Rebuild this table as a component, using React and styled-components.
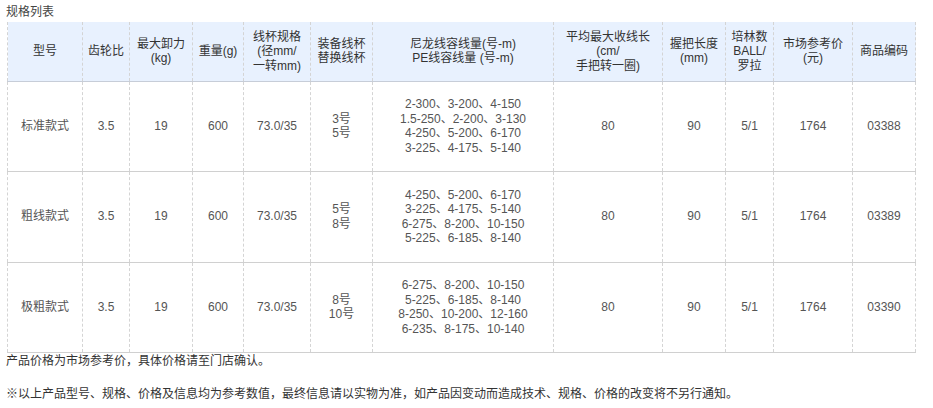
import styled, { createGlobalStyle } from 'styled-components';

const GlobalStyle = createGlobalStyle`
  body {
    margin: 0;
    background: #fff;
    font-family: "Liberation Sans", Arial, "Noto Sans CJK SC", sans-serif;
    font-size: 12px;
    color: #333;
  }
`;

const Page = styled.div`
  padding: 0 6px;
  width: 910px;
`;

const Title = styled.div`
  height: 22px;
  line-height: 24px;
  color: #444;
`;

const Table = styled.table`
  border-collapse: collapse;
  table-layout: fixed;
  width: 908px;
  margin-left: 1px;
  th, td {
    border-left: 1px dashed #d4d4d4;
    border-right: 1px dashed #d4d4d4;
    text-align: center;
    vertical-align: middle;
    padding: 0;
    font-weight: normal;
    line-height: 14.5px;
  }
`;

const HeadRow = styled.tr`
  height: 59px;
  background: #e8f1fe;
  border-bottom: 1px solid #c7cdd8;
  th {
    color: #333;
  }
`;

const BodyRow = styled.tr`
  height: ${p => p.$h}px;
  border-bottom: 1px solid #d0d0d0;
  td {
    color: #555;
  }
`;

const Note = styled.div`
  line-height: 16px;
  color: #333;
  margin-top: ${p => p.$gap || 0}px;
`;

const widths = [75, 47, 63, 51, 67, 62, 181, 109, 63, 48, 79, 63];

const headers = [
  ['型号'],
  ['齿轮比'],
  ['最大卸力', '(kg)'],
  ['重量(g)'],
  ['线杯规格', '(径mm/', '一转mm)'],
  ['装备线杯', '替换线杯'],
  ['尼龙线容线量(号-m)', 'PE线容线量 (号-m)'],
  ['平均最大收线长', '(cm/', '手把转一圈)'],
  ['握把长度', '(mm)'],
  ['培林数', 'BALL/', '罗拉'],
  ['市场参考价', '(元)'],
  ['商品编码'],
];

const rows = [
  {
    name: '标准款式',
    h: 90,
    spool: ['3号', '5号'],
    line: ['2-300、3-200、4-150', '1.5-250、2-200、3-130', '4-250、5-200、6-170', '3-225、4-175、5-140'],
    code: '03388',
  },
  {
    name: '粗线款式',
    h: 91,
    spool: ['5号', '8号'],
    line: ['4-250、5-200、6-170', '3-225、4-175、5-140', '6-275、8-200、10-150', '5-225、6-185、8-140'],
    code: '03389',
  },
  {
    name: '极粗款式',
    h: 90,
    spool: ['8号', '10号'],
    line: ['6-275、8-200、10-150', '5-225、6-185、8-140', '8-250、10-200、12-160', '6-235、8-175、10-140'],
    code: '03390',
  },
];

const Lines = ({ items }) => items.map((t, i) => <div key={i}>{t}</div>);

export default function App() {
  return (
    <>
      <GlobalStyle />
      <Page>
        <Title>规格列表</Title>
        <Table>
          <colgroup>
            {widths.map((w, i) => <col key={i} style={{ width: w }} />)}
          </colgroup>
          <thead>
            <HeadRow>
              {headers.map((h, i) => <th key={i}><Lines items={h} /></th>)}
            </HeadRow>
          </thead>
          <tbody>
            {rows.map(r => (
              <BodyRow key={r.code} $h={r.h}>
                <td>{r.name}</td>
                <td>3.5</td>
                <td>19</td>
                <td>600</td>
                <td>73.0/35</td>
                <td><Lines items={r.spool} /></td>
                <td><Lines items={r.line} /></td>
                <td>80</td>
                <td>90</td>
                <td>5/1</td>
                <td>1764</td>
                <td>{r.code}</td>
              </BodyRow>
            ))}
          </tbody>
        </Table>
        <Note>产品价格为市场参考价，具体价格请至门店确认。</Note>
        <Note $gap={17}>※以上产品型号、规格、价格及信息均为参考数值，最终信息请以实物为准，如产品因变动而造成技术、规格、价格的改变将不另行通知。</Note>
      </Page>
    </>
  );
}
